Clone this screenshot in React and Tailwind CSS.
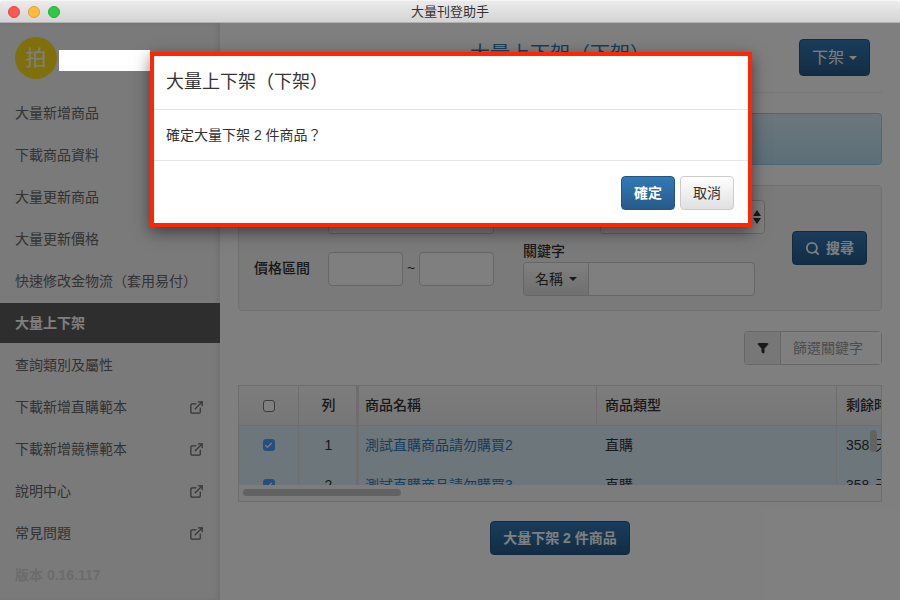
import { Check, ExternalLink, Filter, Search } from "lucide-react";

const font = { fontFamily: '"Liberation Sans", "Noto Sans CJK TC", sans-serif' };

const menu = [
  { label: "大量新增商品" },
  { label: "下載商品資料" },
  { label: "大量更新商品" },
  { label: "大量更新價格" },
  { label: "快速修改金物流（套用易付）" },
  { label: "大量上下架", active: true },
  { label: "查詢類別及屬性" },
  { label: "下載新增直購範本", link: true },
  { label: "下載新增競標範本", link: true },
  { label: "說明中心", link: true },
  { label: "常見問題", link: true },
];

const rows = [
  { id: 1, name: "測試直購商品請勿購買2" },
  { id: 2, name: "測試直購商品請勿購買3" },
];

function Caret({ className = "" }) {
  return (
    <span
      className={`inline-block w-0 h-0 border-x-4 border-x-transparent border-t-4 ${className}`}
    />
  );
}

function BlueButton({ className = "", children }) {
  return (
    <button className={`rounded border border-[#245580] bg-gradient-to-b from-[#337ab7] to-[#265a88] text-white font-bold flex items-center justify-center ${className}`}>
      {children}
    </button>
  );
}

function TextInput({ className = "" }) {
  return <div className={`h-[34px] bg-white border border-[#ccc] rounded ${className}`} />;
}

function CheckBox({ checked }) {
  if (!checked) {
    return <span className="block w-[12px] h-[12px] rounded-[3px] bg-white border border-[#767676]" />;
  }
  return (
    <span className="flex items-center justify-center w-[12px] h-[12px] rounded-[3px] bg-[#4f9dff]">
      <Check size={9} strokeWidth={3} className="text-white" />
    </span>
  );
}

function Sidebar() {
  return (
    <aside className="w-[220px] shrink-0 bg-[#f5f5f5] shadow-[inset_-3px_0_4px_rgba(0,0,0,0.08)] flex flex-col">
      <div className="h-[72px] pl-[15px] pt-[14px] shrink-0">
        <div className="w-[42px] h-[42px] rounded-full bg-[#ffdf1a] text-white text-[21px] flex items-center justify-center">
          拍
        </div>
      </div>
      <nav className="flex flex-col gap-[2px] -mt-[2px]">
        {menu.map((item) => (
          <div
            key={item.label}
            className={`h-[40px] pl-[15px] pr-[16px] flex items-center justify-between text-[14px] ${
              item.active ? "bg-[#5c5c5c] text-white font-bold" : "text-[#666]"
            }`}
          >
            <span>{item.label}</span>
            {item.link && <ExternalLink size={15} strokeWidth={2} className="text-[#666]" />}
          </div>
        ))}
      </nav>
      <div className="pl-[15px] pt-[12px] text-[14px] font-bold text-[#d8d8d8]">版本 0.16.117</div>
    </aside>
  );
}

function Header() {
  return (
    <div className="h-[70px] mx-[18px] border-b border-[#eee] flex items-start relative shrink-0">
      <h1 className="flex-1 text-center text-[20px] leading-[26px] text-[#337ab7] pt-[18px]">
        大量上下架（下架）
      </h1>
      <BlueButton className="absolute right-[12px] top-[16px] w-[71px] h-[37px] gap-[5px] text-[16px] font-normal">
        下架 <Caret className="border-t-white" />
      </BlueButton>
    </div>
  );
}

function SearchPanel() {
  return (
    <div className="mt-[20px] h-[126px] bg-[#f5f5f5] border border-[#e3e3e3] rounded flex flex-col">
      <div className="relative h-[50px] shrink-0">
        <TextInput className="absolute left-[89px] top-[14px] w-[166px]" />
        <div className="absolute left-[361px] top-[14px] w-[165px] h-[34px] bg-white border border-[#ccc] rounded flex items-center justify-end pr-[3px]">
          <span className="flex flex-col gap-[2px]">
            <span className="block w-0 h-0 border-x-4 border-x-transparent border-b-[6px] border-b-[#333]" />
            <span className="block w-0 h-0 border-x-4 border-x-transparent border-t-[6px] border-t-[#333]" />
          </span>
        </div>
      </div>
      <div className="flex pl-[15px] h-[60px] relative text-[14px] text-[#333]">
        <span className="w-[74px] font-medium pt-[22px] leading-[20px]">價格區間</span>
        <TextInput className="w-[75px] mt-[16px]" />
        <span className="w-[16px] text-center pt-[22px] leading-[20px]">~</span>
        <TextInput className="w-[75px] mt-[16px]" />
        <div className="ml-[29px] flex flex-col">
          <span className="font-medium leading-[20px] h-[26px] pt-[5px]">關鍵字</span>
          <div className="flex">
            <button className="w-[66px] h-[34px] border border-[#ccc] rounded-l bg-gradient-to-b from-white to-[#e0e0e0] flex items-center justify-center gap-[6px]">
              名稱 <Caret className="border-t-[#333]" />
            </button>
            <TextInput className="w-[167px] -ml-px rounded-l-none" />
          </div>
        </div>
        <BlueButton className="absolute left-[553px] -top-[5px] w-[75px] h-[34px] gap-[6px] text-[14px]">
          <Search size={15} strokeWidth={3} /> 搜尋
        </BlueButton>
      </div>
    </div>
  );
}

function ProductTable() {
  return (
    <div className="mt-[20px] h-[117px] border border-[#ddd] relative overflow-hidden text-[14px] text-[#333]">
      <div className="h-[99px] overflow-hidden">
        <div className="flex h-[40px] font-medium bg-gradient-to-b from-[#fafafa] to-[#ededed] border-b border-[#ddd]">
          <div className="w-[60px] shrink-0 flex items-center justify-center border-r border-[#ddd]">
            <CheckBox />
          </div>
          <div className="w-[60px] shrink-0 flex items-center justify-center pl-[2px] border-r-[3px] border-[#ddd]">列</div>
          <div className="w-[238px] shrink-0 flex items-center pl-[6px] border-r border-[#ddd]">商品名稱</div>
          <div className="w-[240px] shrink-0 flex items-center pl-[8px] border-r border-[#ddd]">商品類型</div>
          <div className="flex-1 flex items-center pl-[9px] whitespace-nowrap overflow-hidden">剩餘時間</div>
        </div>
        {rows.map((row) => (
          <div key={row.id} className="flex h-[40px] pb-[2px] bg-[#d9edf7]">
            <div className="w-[60px] shrink-0 flex items-center justify-center border-r border-[#ddd] -mb-[2px] pb-[2px]">
              <CheckBox checked />
            </div>
            <div className="w-[60px] shrink-0 flex items-center justify-center pl-[2px] border-r-[3px] border-[#ddd] -mb-[2px] pb-[2px]">{row.id}</div>
            <div className="w-[238px] shrink-0 flex items-center pl-[6px] text-[#337ab7] border-r border-transparent">{row.name}</div>
            <div className="w-[240px] shrink-0 flex items-center pl-[8px] border-r border-[#ddd] -mb-[2px] pb-[2px]">直購</div>
            <div className="flex-1 flex items-center pl-[9px] whitespace-nowrap overflow-hidden">
              358 <span className="ml-[6px]">天</span>
            </div>
          </div>
        ))}
      </div>
      <div className="h-[16px] bg-[#f8f8f8] pt-[4px] pl-[4px]">
        <div className="w-[158px] h-[7px] rounded bg-[#c4c4c4]" />
      </div>
      <div className="absolute right-[4px] top-[44px] w-[7px] h-[22px] rounded bg-[#c4c4c4]" />
    </div>
  );
}

function Main() {
  return (
    <main className="flex-1 bg-white flex flex-col min-w-0">
      <Header />
      <div className="px-[18px] flex flex-col">
        <div className="mt-[20px] h-[52px] bg-gradient-to-b from-[#d9edf7] to-[#b9def0] border border-[#9acfea] rounded" />
        <SearchPanel />
        <div className="mt-[20px] flex justify-end">
          <div className="flex w-[138px] h-[34px] border border-[#ccc] rounded text-[14px]">
            <div className="w-[36px] bg-[#eee] border-r border-[#ccc] rounded-l flex items-center justify-center">
              <Filter size={12} fill="#333" className="text-[#333]" />
            </div>
            <div className="flex-1 bg-white flex items-center pl-[12px] text-[#999]">篩選關鍵字</div>
          </div>
        </div>
        <ProductTable />
        <div className="mt-[19px] flex justify-center">
          <BlueButton className="w-[140px] h-[34px] text-[14px]">大量下架 2 件商品</BlueButton>
        </div>
      </div>
    </main>
  );
}

function ConfirmModal() {
  return (
    <div className="absolute left-[150px] top-[29px] w-[602px] h-[175px] bg-white border-4 border-[#ff2600] shadow-[0_5px_15px_rgba(0,0,0,0.5)] flex flex-col text-[#333]">
      <div className="h-[54px] pl-[12px] flex items-center border-b border-[#e5e5e5] text-[18px]">
        大量上下架（下架）
      </div>
      <div className="h-[51px] pl-[12px] flex items-center border-b border-[#e5e5e5] text-[14px]">
        確定大量下架 2 件商品？
      </div>
      <div className="flex-1 flex items-center justify-end gap-[5px] pr-[14px] pt-[2px] text-[14px]">
        <BlueButton className="w-[54px] h-[34px]">確定</BlueButton>
        <button className="w-[54px] h-[34px] rounded border border-[#ccc] bg-gradient-to-b from-white to-[#e0e0e0]">取消</button>
      </div>
    </div>
  );
}

export default function App() {
  return (
    <div className="w-[900px] h-[600px] overflow-hidden flex flex-col" style={font}>
      <div className="h-[23px] shrink-0 bg-gradient-to-b from-[#ebebeb] to-[#d4d4d4] rounded-t-[4px] border-t border-t-[#f5f5f5] border-b border-b-[#b1b1b1] flex items-center justify-center relative">
        <div className="absolute left-[8px] top-[5px] flex gap-[8px]">
          <span className="w-[12px] h-[12px] rounded-full bg-[#fc5753] border border-[#df4744]" />
          <span className="w-[12px] h-[12px] rounded-full bg-[#fdbc40] border border-[#de9f34]" />
          <span className="w-[12px] h-[12px] rounded-full bg-[#33c748] border border-[#27aa35]" />
        </div>
        <span className="text-[13px] text-[#333]">大量刊登助手</span>
      </div>
      <div className="relative flex-1 flex min-h-0">
        <Sidebar />
        <Main />
        <div className="absolute inset-0 bg-black/50 z-20" />
        <div className="absolute left-[59px] top-[27px] w-[91px] h-[21px] bg-white z-30" />
        <div className="z-30">
          <ConfirmModal />
        </div>
      </div>
    </div>
  );
}
